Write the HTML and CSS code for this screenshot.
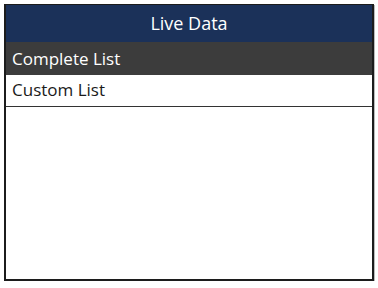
FILE: index.html
```html
<!DOCTYPE html>
<html lang="en">
<head>
    <meta charset="UTF-8">
    <title>Live Data</title>
    <link rel="stylesheet" href="styles.css">
</head>
<body>
    <div class="screen">
        <header class="title-bar">Live Data</header>
        <ul class="menu-list">
            <li class="menu-item selected">Complete List</li>
            <li class="menu-item">Custom List</li>
        </ul>
    </div>
</body>
</html>
```
FILE: styles.css
```css
body {
    margin: 0;
    padding: 0;
    background-color: #fff;
    font-family: "Open Sans", "Noto Sans", sans-serif;
}
.screen {
    margin: 4px 0 0 4px;
    width: 366px;
    height: 274px;
    border: 2px solid #1c1c1c;
    border-top-width: 1px;
    background-color: #fff;
    box-shadow: 1px 1px 0 #bbb;
}
.title-bar {
    height: 37px;
    line-height: 36px;
    background-color: #1b3159;
    color: #fff;
    text-align: center;
    font-size: 18px;
}
.menu-list {
    list-style: none;
    margin: 0;
    padding: 0;
}
.menu-item {
    padding-left: 6px;
    font-size: 17px;
    color: #1a1a1a;
    height: 31px;
    line-height: 30px;
    border-bottom: 1px solid #333;
}
.menu-item.selected {
    height: 33px;
    line-height: 34px;
    background-color: #3c3c3c;
    color: #fff;
    border-bottom: none;
}
```
